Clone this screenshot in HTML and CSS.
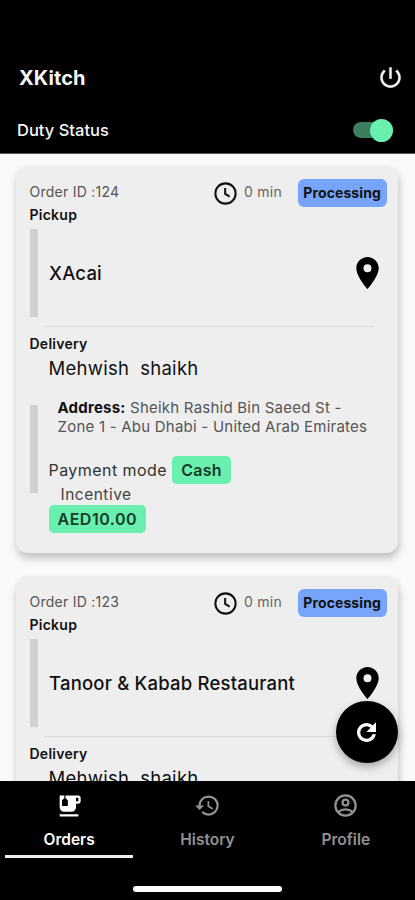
FILE: index.html
```html
<!DOCTYPE html>
<html lang="en">
<head>
<meta charset="utf-8">
<meta name="viewport" content="width=device-width, initial-scale=1">
<title>XKitch</title>
<link rel="stylesheet" href="styles.css">
</head>
<body>
<div class="app">
  <header class="header">
    <div class="title-row">
      <h1 class="brand">XKitch</h1>
      <svg class="power" viewBox="0 0 24 24"><path d="M13 3h-2v10h2V3zm4.83 2.17l-1.42 1.42C17.99 7.86 19 9.81 19 12c0 3.87-3.13 7-7 7s-7-3.13-7-7c0-2.19 1.01-4.14 2.58-5.42L6.17 5.17C4.23 6.82 3 9.26 3 12c0 4.97 4.03 9 9 9s9-4.03 9-9c0-2.74-1.23-5.18-3.17-6.83z"/></svg>
    </div>
    <div class="duty-row">
      <span class="duty">Duty Status</span>
      <span class="switch"><span class="thumb"></span></span>
    </div>
  </header>
  <main class="list">
    <article class="card">
      <div class="card-top">
        <span class="order-id">Order ID :124</span>
        <svg class="clock" viewBox="0 0 24 24"><circle cx="12" cy="12" r="9"/><path d="M11.7 7v5.3l4 2.5"/></svg>
        <span class="time">0 min</span>
        <span class="status">Processing</span>
      </div>
      <div class="label">Pickup</div>
      <div class="pickup">
        <span class="bar"></span>
        <span class="place">XAcai</span>
        <svg class="pin" viewBox="5 2 14 20"><path d="M12 2C8.13 2 5 5.13 5 9c0 5.25 7 13 7 13s7-7.75 7-13c0-3.87-3.13-7-7-7zm0 9.5a2.5 2.5 0 0 1 0-5 2.5 2.5 0 0 1 0 5z"/></svg>
      </div>
      <div class="divider"></div>
      <div class="label">Delivery</div>
      <div class="delivery">
        <span class="bar"></span>
        <div class="details">
          <div class="customer">Mehwish&nbsp; shaikh</div>
          <p class="address"><b>Address:</b> Sheikh Rashid Bin Saeed St -<br>Zone 1 - Abu Dhabi - United Arab Emirates</p>
          <div class="payment"><span class="mode">Payment mode</span><span class="chip">Cash</span></div>
          <div class="incentive">Incentive</div>
          <div class="chip amount">AED10.00</div>
        </div>
      </div>
    </article>
    <article class="card">
      <div class="card-top">
        <span class="order-id">Order ID :123</span>
        <svg class="clock" viewBox="0 0 24 24"><circle cx="12" cy="12" r="9"/><path d="M11.7 7v5.3l4 2.5"/></svg>
        <span class="time">0 min</span>
        <span class="status">Processing</span>
      </div>
      <div class="label">Pickup</div>
      <div class="pickup">
        <span class="bar"></span>
        <span class="place">Tanoor &amp; Kabab Restaurant</span>
        <svg class="pin" viewBox="5 2 14 20"><path d="M12 2C8.13 2 5 5.13 5 9c0 5.25 7 13 7 13s7-7.75 7-13c0-3.87-3.13-7-7-7zm0 9.5a2.5 2.5 0 0 1 0-5 2.5 2.5 0 0 1 0 5z"/></svg>
      </div>
      <div class="divider"></div>
      <div class="label">Delivery</div>
      <div class="delivery">
        <div class="details">
          <div class="customer">Mehwish&nbsp; shaikh</div>
        </div>
      </div>
    </article>
    <button class="fab" aria-label="Refresh"><svg viewBox="0 0 24 24"><path d="M17.65 6.35A7.958 7.958 0 0 0 12 4c-4.42 0-7.99 3.58-7.99 8s3.57 8 7.99 8c3.73 0 6.84-2.55 7.73-6h-2.08A5.99 5.99 0 0 1 12 18c-3.31 0-6-2.69-6-6s2.69-6 6-6c1.66 0 3.14.69 4.22 1.78L13 11h7V4l-2.35 2.35z"/></svg></button>
  </main>
  <nav class="nav">
    <div class="tabs">
      <div class="tab active">
        <svg viewBox="0 0 24 24"><path d="M20 3H9v2.4l1.81 1.45c.12.09.19.24.19.39v4.26c0 .28-.22.5-.5.5h-4c-.28 0-.5-.22-.5-.5V7.24c0-.15.07-.3.19-.39L8 5.4V3H4v10c0 2.21 1.79 4 4 4h6c2.21 0 4-1.79 4-4v-3h2c1.11 0 2-.9 2-2V5c0-1.11-.89-2-2-2zm0 5h-2V5h2v3zM4 19h16v2H4z"/></svg>
        <span class="tab-name">Orders</span>
      </div>
      <div class="tab">
        <svg viewBox="0 0 24 24"><path d="M13 3a9 9 0 0 0-9 9H1l3.89 3.89.07.14L9 12H6c0-3.87 3.13-7 7-7s7 3.13 7 7-3.13 7-7 7c-1.93 0-3.68-.79-4.94-2.06l-1.42 1.42A8.954 8.954 0 0 0 13 21a9 9 0 0 0 0-18zm-1 5v5l4.28 2.54.72-1.21-3.5-2.08V8H12z"/></svg>
        <span class="tab-name">History</span>
      </div>
      <div class="tab">
        <svg viewBox="0 0 24 24"><g class="outline"><circle cx="12" cy="12" r="9"/><circle cx="12" cy="9.4" r="2.6"/><path d="M5.7 17.8c3.3-3.1 9.3-3.1 12.6 0"/></g></svg>
        <span class="tab-name">Profile</span>
      </div>
    </div>
    <div class="home-indicator"></div>
  </nav>
</div>
</body>
</html>
```
FILE: styles.css
```css
* { box-sizing: border-box; }
body { margin: 0; font-family: Inter, "Liberation Sans", sans-serif; }
svg { display: block; flex: none; }
.app { width: 415px; height: 900px; display: flex; flex-direction: column; overflow: hidden; background: #fafafa; }

.header { height: 154px; flex: none; background: #000; color: #f5f5f5; padding-top: 57px; border-bottom: 1px solid #555; }
.title-row { height: 41px; padding: 0 11px 0 19px; display: flex; align-items: center; justify-content: space-between; }
.brand { margin: 0; font-size: 20px; font-weight: 700; letter-spacing: .1px; }
.power { width: 27px; height: 27px; fill: #f5f5f5; stroke: #f5f5f5; stroke-width: .3; }
.duty-row { height: 40px; margin-top: 12px; padding: 0 22px 0 17px; display: flex; align-items: center; justify-content: space-between; }
.duty { font-size: 16.5px; font-weight: 500; }
.switch { width: 40px; height: 16px; border-radius: 8px; background: #3b7f5f; display: flex; align-items: center; justify-content: flex-end; }
.thumb { width: 23px; height: 23px; border-radius: 50%; background: #69f0ae; flex: none; }

.list { position: relative; flex: 1; min-height: 0; overflow: hidden; padding: 12px 17px 0 16px; }
.card { height: 387px; margin-bottom: 23px; padding: 13px 11.5px 0 13.5px; background: #eee; border-radius: 12px; box-shadow: 1px 5px 8px rgba(0,0,0,.24); color: #111; }
.card-top { height: 28px; display: flex; align-items: center; }
.order-id { width: 183px; font-size: 14px; line-height: 18px; padding-bottom: 2px; color: #555; letter-spacing: .25px; }
.clock { width: 27px; height: 27px; fill: none; stroke: #111; stroke-width: 1.8; }
.time { width: 59px; padding: 0 0 2px 5px; font-size: 14px; line-height: 18px; color: #666; letter-spacing: .3px; white-space: nowrap; }
.status { width: 89px; height: 28px; border-radius: 6px; background: #76a5fb; font-size: 14px; font-weight: 700; line-height: 27px; text-align: center; letter-spacing: .1px; }
.label { height: 20px; line-height: 15px; font-size: 14px; font-weight: 600; letter-spacing: .25px; }
.pickup { height: 92px; display: flex; align-items: center; padding: 2px 8px 2px 0; }
.bar { width: 8px; height: 88px; background: #d1d1d1; flex: none; }
.place { flex: 1; padding-left: 11.5px; font-size: 18.5px; font-weight: 500; letter-spacing: .2px; }
.pin { width: 23px; height: 32px; }
.divider { height: 1px; margin: 7px 13px 9px 14px; background: #d9d9d9; }
.delivery { display: flex; align-items: flex-start; }
.delivery .bar { margin-top: 49px; }
.delivery .details { padding-left: 11px; }
.card:nth-child(2) .details { padding-left: 19px; }
.customer { height: 26px; line-height: 25px; font-size: 18.5px; letter-spacing: .28px; white-space: nowrap; }
.address { margin: 16px 0 0 9px; font-size: 15px; line-height: 19px; color: #555; white-space: nowrap; letter-spacing: .23px; }
.address b { color: #111; font-weight: 700; }
.payment { display: flex; align-items: center; gap: 5px; margin-top: 20px; }
.mode { font-size: 16px; color: #333; letter-spacing: .45px; }
.chip { height: 28px; padding: 0 9px; border-radius: 5px; background: #69f0ae; font-size: 16px; font-weight: 600; line-height: 28px; letter-spacing: .3px; color: #173a29; }
.incentive { height: 21px; padding-left: 12px; line-height: 21px; font-size: 15.5px; color: #444; letter-spacing: .5px; }
.amount { width: 97px; white-space: nowrap; letter-spacing: .5px; }
.fab { position: absolute; right: 17.5px; bottom: 18px; width: 62px; height: 62px; padding: 0; border: 0; border-radius: 50%; background: #000; display: flex; align-items: center; justify-content: center; box-shadow: 0 4px 8px rgba(0,0,0,.3); }
.fab svg { width: 27px; height: 27px; fill: #fff; stroke: #fff; stroke-width: .9; }

.nav { height: 119px; flex: none; background: #000; }
.tabs { display: flex; height: 77px; }
.tab { flex: 1; display: flex; flex-direction: column; align-items: center; padding-top: 11px; color: #929292; }
.tab svg { width: 27px; height: 27px; fill: currentColor; }
.tab:nth-child(1) svg { width: 28px; height: 28px; margin-bottom: -1px; }
.tab-name { height: 32px; line-height: 42px; font-size: 15.5px; font-weight: 600; }
.tab.active { color: #fff; }
.tab.active::after { content: ""; width: 128px; height: 3px; margin-top: 3.5px; background: #f0eeee; flex: none; }
.outline { fill: none; stroke: currentColor; stroke-width: 2; }
.home-indicator { width: 149px; height: 6px; margin: 28px auto 0; border-radius: 3px; background: #fff; }
```
